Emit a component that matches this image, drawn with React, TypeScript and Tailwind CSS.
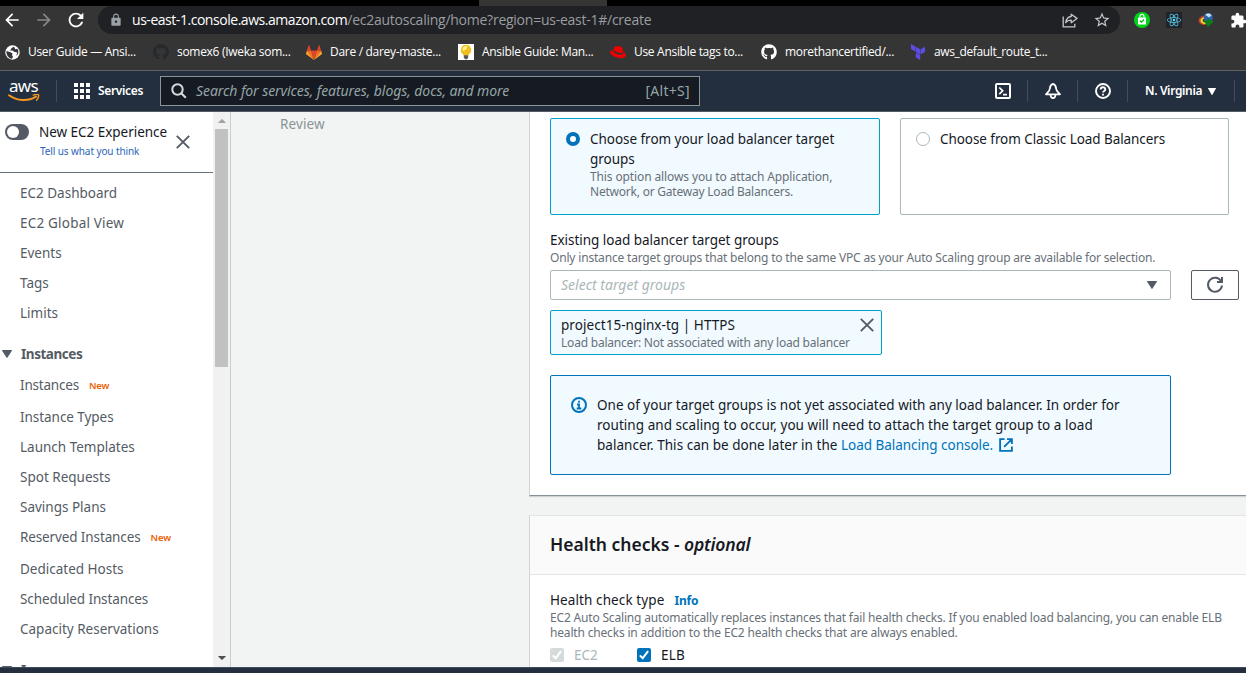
import type { ReactNode } from "react";
import { FaGithub } from "react-icons/fa";
import { SiReact, SiRedhat, SiTerraform } from "react-icons/si";
import { MdArrowBack, MdArrowForward, MdExtension, MdLock, MdRefresh, MdStarBorder } from "react-icons/md";

function Smile() {
  return (
    <svg className="-mt-[1px] block" width="32" height="9" viewBox="0 0 32 9" fill="none">
      <path d="M1 1.2C9 7 20 7.6 28 2.6" stroke="#f79820" strokeWidth="1.9" strokeLinecap="round" />
      <path d="M25.2 1.1C28.2.3 30.3.4 30.6 1c.3.8-.4 3.6-2 5.2" stroke="#f79820" strokeWidth="1.4" strokeLinecap="round" />
    </svg>
  );
}

function Gitlab() {
  return (
    <svg width="16" height="15" viewBox="0 0 16 15">
      <path d="M8 15 5 5.6h6z" fill="#e24329" />
      <path d="M8 15 5 5.6H.9zM8 15l3-9.4h4.1z" fill="#fc6d26" />
      <path d="M.9 5.6 0 8.4c-.1.3 0 .6.2.8L8 15zM15.1 5.6l.9 2.8c.1.3 0 .6-.2.8L8 15z" fill="#fca326" />
      <path d="M.9 5.6H5L3.2.3c-.1-.3-.5-.3-.6 0zM15.1 5.6H11L12.8.3c.1-.3.5-.3.6 0z" fill="#e24329" />
    </svg>
  );
}

function Globe() {
  return (
    <svg width="15" height="15" viewBox="0 0 15 15">
      <circle cx="7.5" cy="7.5" r="7.2" fill="#fff" />
      <path d="M1.5 6 5.5 7.200l2 1.300-.4 2 .9 1.300-1 2C3.500 13.200 1 10 1.500 6zM8.500 1.800 6.200 3.600l-1 2.200 2.600-.3 1.200 1.300 3.200.7-.8 3.600c2.400-2.400 2.600-5.200 1-7.300l-2.200.4-.5-1.400z" fill="#35363a" />
    </svg>
  );
}

function Bulb() {
  return (
    <svg width="16" height="16" viewBox="0 0 16 16">
      <path d="M0 0h16v16H0z" fill="#fff" />
      <path d="M8 .8a5.200 5.200 0 0 0-3.300 9.200c.8.700 1 1.200 1.100 1.700h4.400c.1-.5.3-1 1.100-1.700A5.200 5.200 0 0 0 8 .8z" fill="#f0be1c" />
      <path d="M4.500 5C4.800 2.800 7 1.600 9 2.300 10.500 3.500 7.500 6.500 5 7z" fill="#fff08c" />
      <path d="M5.800 11.300h4.400v2.400L8.900 15.300H7.200l-1.400-1.600z" fill="#5d5953" />
    </svg>
  );
}

function Share() {
  return (
    <svg width="16" height="15" viewBox="0 0 16 15" fill="none" stroke="#c4c7ca" strokeWidth="1.3">
      <path d="M1.200 3.500v10.300h11.600v-3" />
      <path d="M9.200 1.200 15 5.400 9.200 9.700V7.100C6.500 7 4.800 8 3.700 9.600 4.300 6 6 3.800 9.200 3.500z" strokeLinejoin="round" />
    </svg>
  );
}

function ShopBag() {
  return (
    <svg width="16" height="16" viewBox="0 0 16 16">
      <circle cx="8" cy="8" r="8" fill="#00d318" />
      <path d="M4 5.500h8v7H4z" fill="#fff" />
      <path d="M6 5.500V4.300a2 2 0 0 1 4 0v1.200" stroke="#fff" strokeWidth="1.2" fill="none" />
      <path d="m5.900 8.700 1.500 1.500 2.700-2.700" stroke="#00b815" strokeWidth="1.3" fill="none" />
    </svg>
  );
}

function DownloadManager() {
  return (
    <svg width="16" height="16" viewBox="0 0 16 16">
      <path d="M8 3.500C4 3.200 1 5.500.6 8c-.2 3 2.400 5 6.400 5l1.500-1.500C5 11.500 3 10.500 3.200 8.500 3.500 6.500 5.500 5.500 8 5.500z" fill="#c9402c" />
      <path d="M8 4.800C5 4.800 2.500 6.500 2.500 8.700c0 2 2.500 3.400 5.500 3.400l.5-1.500C6 10.500 4.500 9.800 4.600 8.600 4.700 7.300 6 6.500 8 6.500z" fill="#e8d936" />
      <circle cx="10.3" cy="5.6" r="4.6" fill="#2a62b0" />
      <path d="M7.300 3C9 .9 12.300 1.200 13.500 3.500L11 5.500 9.300 4.300z" fill="#c3def1" />
      <path d="m4.800 7.800 4.500.6V6.200l6.500 3.200-5.800 5.600z" fill="#0f7d1b" />
    </svg>
  );
}

function Refresh() {
  return (
    <svg width="18" height="18" viewBox="0 0 18 18" fill="none" stroke="#545b64" strokeWidth="2">
      <path d="M15.300 5.600A7 7 0 1 0 16 9.500" />
      <path d="M16 1v5h-5" />
    </svg>
  );
}

function Close() {
  return (
    <svg width="14" height="14" viewBox="0 0 14 14" stroke="#545b64" strokeWidth="1.9">
      <path d="m.8.8 12.400 12.400M13.200.8.8 13.200" />
    </svg>
  );
}

function Caret({ className, w = 10, h = 8 }: { className: string; w?: number; h?: number }) {
  return (
    <svg className={`shrink-0 ${className}`} width={w} height={h} viewBox="0 0 10 8" preserveAspectRatio="none" fill="currentColor">
      <path d="M.5 0h9c.4 0 .6.4.4.7L5.5 7.6c-.2.4-.8.4-1 0L.1.7C-.1.4.1 0 .5 0z" />
    </svg>
  );
}

function Check({ className }: { className: string }) {
  return (
    <span className={`flex h-[14px] w-[14px] items-center justify-center rounded-[2px] ${className}`}>
      <svg width="10" height="10" viewBox="0 0 10 10" fill="none" stroke="#fff" strokeWidth="2">
        <path d="m.8 5.400 2.900 2.800L9.100 1.200" />
      </svg>
    </span>
  );
}

function Bookmark({ icon, width, children }: { icon: ReactNode; width: string; children: string }) {
  return (
    <div className={`flex shrink-0 items-center ${width}`}>
      <span className="flex w-4 shrink-0 justify-center">{icon}</span>
      <span className="ml-[8px] whitespace-nowrap">{children}</span>
    </div>
  );
}

function BrowserChrome() {
  return (
    <header className="h-[71px] border-b border-[#5f6163] bg-[#353535] font-['Open_Sans',sans-serif] text-white">
      <div className="flex h-[6px] justify-between bg-black">
        <div className="ml-[479px] w-[128px] bg-[#353535]" />
      </div>
      <div className="flex h-[28px] items-center">
        <MdArrowBack className="ml-[2px] shrink-0" size={20} />
        <MdArrowForward className="ml-[12px] shrink-0 text-[#87888a]" size={20} />
        <MdRefresh className="ml-[11px] shrink-0" size={22} />
        <div className="ml-[11px] flex h-[28px] w-[1022px] shrink-0 items-center rounded-full bg-[#202124] pl-[11px] pr-[9px]">
          <MdLock className="text-[#9aa0a6]" size={14} />
          <span className="ml-[9px] whitespace-nowrap text-[14px] leading-5 tracking-[-0.46px]">us-east-1.console.aws.amazon.com</span>
          <span className="whitespace-nowrap text-[14px] leading-5 tracking-[-0.25px] text-[#9a9da1]">/ec2autoscaling/home?region=us-east-1#/create</span>
          <span className="ml-auto"><Share /></span>
          <MdStarBorder className="ml-[15px] text-[#c4c7ca]" size={18} />
        </div>
        <div className="ml-[14px] flex shrink-0 items-center gap-[16px]">
          <ShopBag />
          <span className="flex h-4 w-4 items-center justify-center bg-[#20232a] text-[#61dafb]"><SiReact size={14} /></span>
          <DownloadManager />
          <MdExtension size={17} />
        </div>
      </div>
      <div className="flex h-[36px] items-center pl-[4px] text-[12px] tracking-[-0.3px]">
        <Bookmark icon={<Globe />} width="w-[149px]">User Guide — Ansi...</Bookmark>
        <Bookmark icon={<FaGithub size={16} className="text-[#24292e]" />} width="w-[153px]">somex6 (Iweka som...</Bookmark>
        <Bookmark icon={<Gitlab />} width="w-[152px]">Dare / darey-maste...</Bookmark>
        <Bookmark icon={<Bulb />} width="w-[152px]">Ansible Guide: Man...</Bookmark>
        <Bookmark icon={<SiRedhat size={16} className="text-[#ee0000]" />} width="w-[151px]">Use Ansible tags to...</Bookmark>
        <Bookmark icon={<FaGithub size={16} />} width="w-[149px]">morethancertified/...</Bookmark>
        <Bookmark icon={<SiTerraform size={16} className="text-[#5c4ee5]" />} width="w-[149px] tracking-[-0.36px]">aws_default_route_t...</Bookmark>
      </div>
    </header>
  );
}

function AwsNav() {
  return (
    <nav className="flex h-[41px] items-center border-b border-[#545b64] bg-[#232f3e] text-white">
      <div className="ml-[8px] w-[32px]">
        <div className="h-[15px] pl-px text-[17px] leading-[12px] tracking-[-0.7px]">aws</div>
        <Smile />
      </div>
      <div className="ml-[16px] h-[22px] w-px bg-[#414d5c]" />
      <div className="ml-[17px] grid grid-cols-3 gap-[2px]">
        {Array.from({ length: 9 }, (_, i) => (
          <span key={i} className="h-[4px] w-[4px] bg-white" />
        ))}
      </div>
      <span className="ml-[8px] w-[62px] whitespace-nowrap text-[12px] font-semibold tracking-[-0.35px]">Services</span>
      <div className="flex h-[30px] w-[540px] items-center border border-[#879596] bg-[#161a22] pl-[10px] pr-[9px] text-[14px] text-[#95a5a6]">
        <svg width="16" height="16" viewBox="0 0 16 16" fill="none" stroke="#d5dbdb" strokeWidth="2">
          <circle cx="6.5" cy="6.5" r="5.2" />
          <path d="m10.300 10.300 4.500 4.500" />
        </svg>
        <span className="-mt-px ml-[9px] whitespace-nowrap italic tracking-[-0.07px]">Search for services, features, blogs, docs, and more</span>
        <span className="-mt-px ml-auto tracking-[0.3px]">[Alt+S]</span>
      </div>
      <div className="ml-auto flex items-center">
        <svg width="16" height="16" viewBox="0 0 16 16" fill="none" stroke="#fff" strokeWidth="2">
          <rect x="1" y="1" width="14" height="14" rx="1" />
          <path d="m4.300 4.500 3.400 3.300-3.400 3.300M8 11.700h4" strokeWidth="1.7" />
        </svg>
        <div className="ml-[16px] h-[22px] w-px bg-[#414d5c]" />
        <svg className="ml-[17px]" width="16" height="16" viewBox="0 0 16 16" fill="none" stroke="#fff" strokeWidth="1.8" strokeLinejoin="round">
          <path d="M8 .9C5.600 1.700 5 3.600 4.900 5.500 4.700 8 3 8.900 1 11.300h14c-2-2.400-3.700-3.300-3.900-5.800C11 3.600 10.400 1.700 8 .9zM5.600 12.200c.3 3.700 4.500 3.700 4.800 0" />
        </svg>
        <div className="ml-[16px] h-[22px] w-px bg-[#414d5c]" />
        <svg className="ml-[17px]" width="16" height="16" viewBox="0 0 16 16" fill="none" stroke="#fff" strokeWidth="1.9">
          <circle cx="8" cy="8" r="7" />
          <path d="M5.700 6.500c0-3 4.600-3 4.600-.1C10.300 8 8 7.900 8 9.600M8 10.800v1.800" />
        </svg>
        <div className="ml-[16px] h-[22px] w-px bg-[#414d5c]" />
        <span className="ml-[17px] w-[58px] whitespace-nowrap text-[12px] font-semibold tracking-[-0.35px]">N. Virginia</span>
        <Caret className="ml-[5px]" w={8} h={7} />
        <div className="ml-[18px] mr-[11px] h-[22px] w-px bg-[#414d5c]" />
      </div>
    </nav>
  );
}

function NavItem({ children, isNew = false, className = "" }: { children: string; isNew?: boolean; className?: string }) {
  return (
    <li className={`flex h-[30px] items-center pl-[20px] ${className}`}>
      <span className="whitespace-nowrap">{children}</span>
      {isNew && <span className="ml-[10px] mt-[3px] text-[9.5px] font-semibold text-[#eb5f07]">New</span>}
    </li>
  );
}

function NavGroup({ children }: { children: string }) {
  return (
    <li className="mt-[11px] flex h-[30px] items-center pl-[2px] font-bold tracking-[-0.45px]">
      <Caret className="text-[#545b64]" />
      <span className="ml-[9px]">{children}</span>
    </li>
  );
}

function Sidebar() {
  return (
    <aside className="flex w-[231px] shrink-0 border-r border-[#c9cdd0] bg-white">
      <div className="h-[555px] w-[213px] overflow-hidden">
        <div className="flex h-[61px] border-b border-[#687078] pl-[5px]">
          <span className="mt-[12px] flex h-[16px] w-[24px] rounded-full bg-[#545b64] p-[2px]">
            <span className="h-[12px] w-[12px] rounded-full bg-white" />
          </span>
          <div className="ml-[10px] mt-[10px] w-[137px] whitespace-nowrap">
            <div className="text-[13.5px] leading-5 tracking-[-0.03px] text-[#16191f]">New EC2 Experience</div>
            <div className="pl-px text-[10px] leading-[18px] tracking-[-0.1px] text-[#2a66b8]">Tell us what you think</div>
          </div>
          <span className="mt-[23px]"><Close /></span>
        </div>
        <ul className="pt-[5px] text-[13.5px] text-[#545b64]">
          <NavItem>EC2 Dashboard</NavItem>
          <NavItem className="tracking-[0.2px]">EC2 Global View</NavItem>
          <NavItem>Events</NavItem>
          <NavItem>Tags</NavItem>
          <NavItem>Limits</NavItem>
          <NavGroup>Instances</NavGroup>
          <NavItem isNew className="mb-[2px] mt-px tracking-[-0.2px]">Instances</NavItem>
          <NavItem className="tracking-[-0.05px]">Instance Types</NavItem>
          <NavItem>Launch Templates</NavItem>
          <NavItem>Spot Requests</NavItem>
          <NavItem>Savings Plans</NavItem>
          <NavItem isNew className="mb-[2px] tracking-[-0.12px]">Reserved Instances</NavItem>
          <NavItem>Dedicated Hosts</NavItem>
          <NavItem className="tracking-[-0.1px]">Scheduled Instances</NavItem>
          <NavItem>Capacity Reservations</NavItem>
          <NavGroup>Images</NavGroup>
        </ul>
      </div>
      <div className="flex w-[17px] flex-col items-center bg-[#f1f1f1]">
        <Caret className="mt-[7px] rotate-180 text-[#a3a3a3]" w={8} h={4} />
        <div className="mt-[6px] h-[238px] w-[13px] bg-[#c1c1c1]" />
        <Caret className="mb-[7px] mt-auto text-[#505050]" w={8} h={4} />
      </div>
    </aside>
  );
}

function TargetOptions() {
  return (
    <div className="flex gap-[20px]">
      <div className="flex h-[97px] w-[330px] rounded-[2px] border border-[#00a1c9] bg-[#f1faff] pl-[15px] pt-[10px]">
        <span className="mt-[3px] h-[14px] w-[14px] rounded-full border-[4.5px] border-[#0073bb] bg-white" />
        <div className="ml-[10px] whitespace-nowrap">
          <div className="leading-5 tracking-[-0.04px]">Choose from your load balancer target<br />groups</div>
          <div className="text-[12px] leading-[15px] tracking-[-0.12px] text-[#687078]">This option allows you to attach Application,<br /><span className="tracking-[-0.22px]">Network, or Gateway Load Balancers.</span></div>
        </div>
      </div>
      <div className="flex h-[97px] w-[329px] rounded-[2px] border border-[#aab7b8] bg-white pl-[15px] pt-[10px]">
        <span className="mt-[3px] h-[14px] w-[14px] rounded-full border border-[#aab7b8]" />
        <span className="ml-[10px] whitespace-nowrap leading-5 tracking-[-0.07px]">Choose from Classic Load Balancers</span>
      </div>
    </div>
  );
}

function LoadBalancing() {
  return (
    <section className="h-[384px] shrink-0 border-b border-[#879196] border-l border-l-[#d0d4d5] bg-white pl-[20px] pt-[6px] shadow-[0_1px_1px_rgba(0,28,36,0.15)]">
      <TargetOptions />
      <div className="mt-[15px] leading-5 tracking-[-0.03px]">Existing load balancer target groups</div>
      <div className="whitespace-nowrap text-[12px] leading-[15px] tracking-[-0.18px] text-[#687078]">Only instance target groups that belong to the same VPC as your Auto Scaling group are available for selection.</div>
      <div className="mt-[5px] flex">
        <div className="flex h-[30px] w-[621px] items-center justify-between rounded-[2px] border border-[#aab7b8] pl-[10px] pr-[13px]">
          <span className="-mt-px text-[14px] italic text-[#aab7b8]">Select target groups</span>
          <Caret className="text-[#545b64]" />
        </div>
        <button className="ml-[20px] flex h-[30px] w-[48px] items-center justify-center rounded-[2px] border border-[#545b64]"><Refresh /></button>
      </div>
      <div className="mt-[10px] flex h-[45px] w-[332px] justify-between rounded-[2px] border border-[#00a1c9] bg-[#f1faff] pl-[10px] pr-[7px] pt-[4px]">
        <div className="whitespace-nowrap">
          <div className="leading-5 tracking-[0.06px]">project15-nginx-tg | HTTPS</div>
          <div className="text-[12px] leading-[15px] tracking-[-0.21px] text-[#687078]">Load balancer: Not associated with any load balancer</div>
        </div>
        <span className="mt-[3px]"><Close /></span>
      </div>
      <div className="mt-[20px] flex h-[100px] w-[621px] rounded-[2px] border border-[#0073bb] bg-[#f1faff] pl-[20px] pt-[19px]">
        <svg className="mt-[2px]" width="16" height="16" viewBox="0 0 16 16" fill="none" stroke="#0073bb" strokeWidth="2">
          <circle cx="8" cy="8" r="7" />
          <path d="M8 3.700v2M6 7.500h2v4M5.700 11.500h4.600" strokeWidth="1.8" />
        </svg>
        <div className="ml-[10px] whitespace-nowrap leading-5">
          One of your target groups is not yet associated with any load balancer. In order for<br />
          <span className="tracking-[0.04px]">routing and scaling to occur, you will need to attach the target group to a load</span><br />
          <span className="flex items-center">
            <span className="whitespace-pre tracking-[0.03px]">balancer. This can be done later in the </span>
            <span className="tracking-[-0.03px] text-[#0073bb]">Load Balancing console.</span>
            <svg className="ml-[6px]" width="14" height="14" viewBox="0 0 15 15" fill="none" stroke="#0073bb" strokeWidth="2">
              <path d="M6 1.200H1.200v12.600h12.600V9M8.500 1.200h5.300v5.300M13.500 1.500 5.500 9.500" />
            </svg>
          </span>
        </div>
      </div>
    </section>
  );
}

function HealthChecks() {
  return (
    <section className="mt-[19px] h-[200px] shrink-0 border-l border-t border-[#e3e6e6] border-l-[#d0d4d5] bg-white">
      <h2 className="flex h-[59px] items-center border-b border-[#e3e6e6] bg-[#fafafa] pb-[2px] pl-[20px] text-[17.5px] font-semibold">
        <span className="whitespace-pre">Health checks - </span><em className="tracking-[-0.2px]">optional</em>
      </h2>
      <div className="pl-[20px] pt-[15px]">
        <div className="flex items-center leading-5 tracking-[0.1px]">Health check type<span className="ml-[10px] mt-px text-[12px] font-bold leading-[19px] tracking-[-0.2px] text-[#0073bb]">Info</span></div>
        <div className="whitespace-nowrap text-[12px] leading-[15px] tracking-[-0.175px] text-[#687078]">
          EC2 Auto Scaling automatically replaces instances that fail health checks. If you enabled load balancing, you can enable ELB<br />
          health checks in addition to the EC2 health checks that are always enabled.
        </div>
        <div className="mt-[5px] flex items-center leading-5">
          <Check className="bg-[#d5dbdb]" />
          <span className="ml-[10px] w-[63px] text-[#aab7b8]">EC2</span>
          <Check className="bg-[#0073bb]" />
          <span className="ml-[10px] tracking-[0.2px]">ELB</span>
        </div>
      </div>
    </section>
  );
}

export default function App() {
  return (
    <div className="flex h-[673px] w-[1246px] flex-col overflow-hidden bg-[#f2f3f3] font-['Noto_Sans',sans-serif]">
      <BrowserChrome />
      <AwsNav />
      <div className="flex h-[555px] overflow-hidden">
        <Sidebar />
        <div className="w-[298px] shrink-0 pl-[49px] pt-[2px] text-[13.5px] leading-5 tracking-[0.1px] text-[#879596]">Review</div>
        <main className="flex min-w-0 flex-1 flex-col overflow-hidden text-[13.5px] text-[#16191f]">
          <LoadBalancing />
          <HealthChecks />
        </main>
      </div>
      <footer className="h-[6px] border-t border-[#414d5c] bg-[#232f3e]" />
    </div>
  );
}
